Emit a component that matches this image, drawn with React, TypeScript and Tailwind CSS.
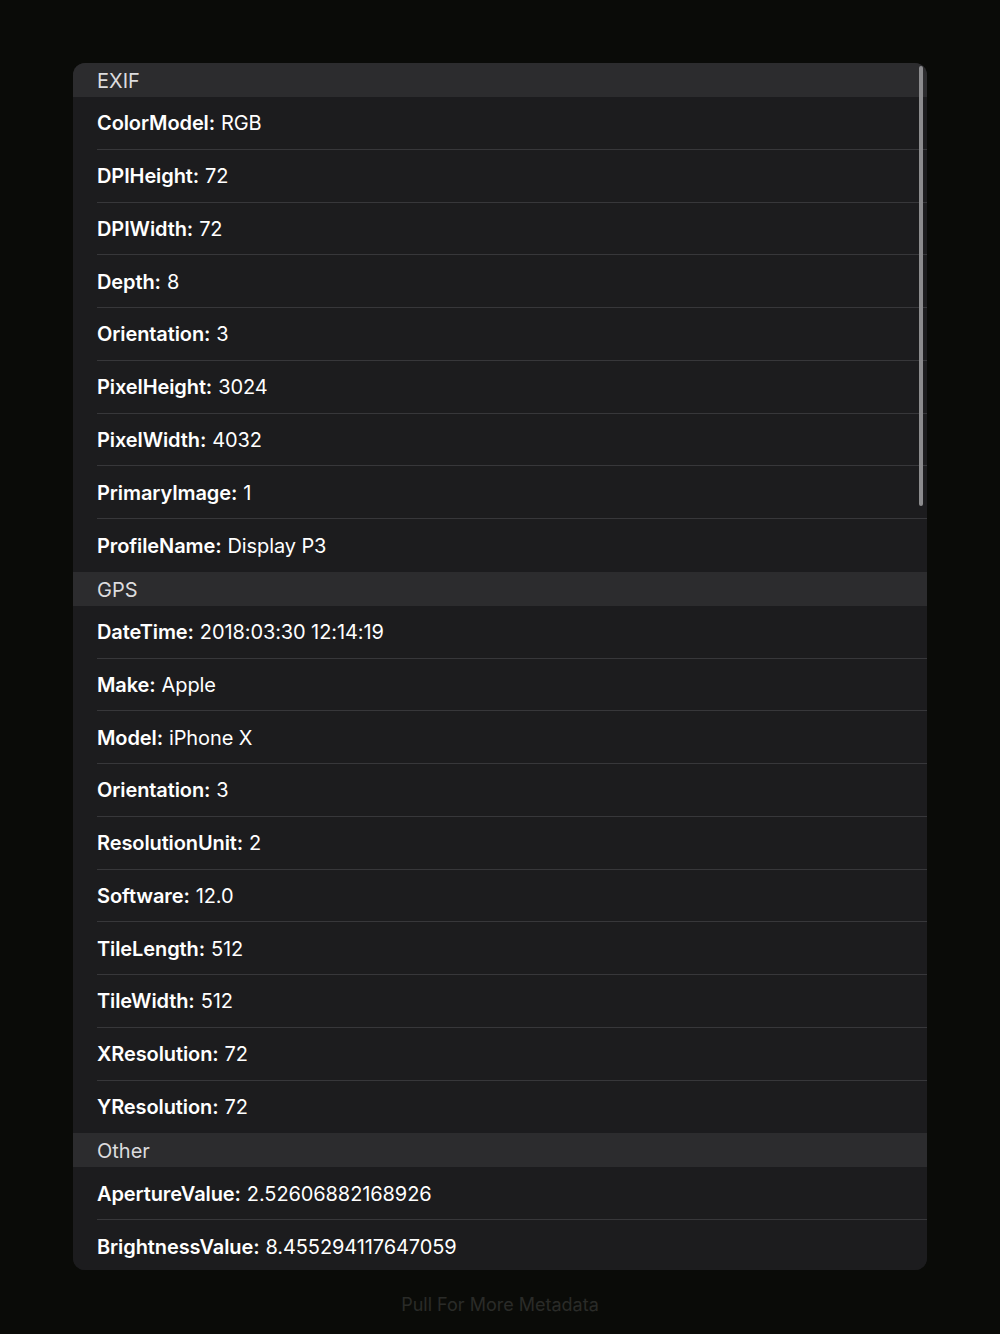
import React from "react";

type Section = { title: string; rows: [string, string][] };

const sections: Section[] = [
  {
    title: "EXIF",
    rows: [
      ["ColorModel", "RGB"],
      ["DPIHeight", "72"],
      ["DPIWidth", "72"],
      ["Depth", "8"],
      ["Orientation", "3"],
      ["PixelHeight", "3024"],
      ["PixelWidth", "4032"],
      ["PrimaryImage", "1"],
      ["ProfileName", "Display P3"],
    ],
  },
  {
    title: "GPS",
    rows: [
      ["DateTime", "2018:03:30 12:14:19"],
      ["Make", "Apple"],
      ["Model", "iPhone X"],
      ["Orientation", "3"],
      ["ResolutionUnit", "2"],
      ["Software", "12.0"],
      ["TileLength", "512"],
      ["TileWidth", "512"],
      ["XResolution", "72"],
      ["YResolution", "72"],
    ],
  },
  {
    title: "Other",
    rows: [
      ["ApertureValue", "2.52606882168926"],
      ["BrightnessValue", "8.455294117647059"],
    ],
  },
];

export default function App() {
  return (
    <div
      className="w-[1000px] h-[1334px] bg-[#0a0b08] flex flex-col items-center pt-[63px] overflow-hidden"
      style={{ fontFamily: "Inter, 'Noto Sans', sans-serif" }}
    >
      <div className="relative w-[854px] h-[1207px] rounded-[12px] overflow-hidden bg-[#1c1c1e]">
        {sections.map((s) => (
          <div key={s.title}>
            <div className="h-[34px] bg-[#2c2c2e] pl-[24px] flex items-center text-[20px] text-[#dcdcde] leading-none pt-[2px]">
              {s.title}
            </div>
            {s.rows.map(([k, v], i) => (
              <div key={k + i} className="pl-[24px] bg-[#1c1c1e]">
                <div
                  className={
                    "h-[52.75px] flex items-center text-[20px] text-white leading-none pt-[1px] tracking-[-0.1px] " +
                    (i < s.rows.length - 1 ? "border-b border-[#37373a]" : "")
                  }
                >
                  <span className="font-semibold">{k}:</span>
                  <span className="ml-[6px] font-normal">{v}</span>
                </div>
              </div>
            ))}
          </div>
        ))}
        <div className="absolute right-[4px] top-[3px] w-[4px] h-[440px] rounded-full bg-[#8c8c8e]" />
      </div>
      <div className="mt-[25px] text-[18px] text-[#2a2b28] leading-[20px]">Pull For More Metadata</div>
    </div>
  );
}
